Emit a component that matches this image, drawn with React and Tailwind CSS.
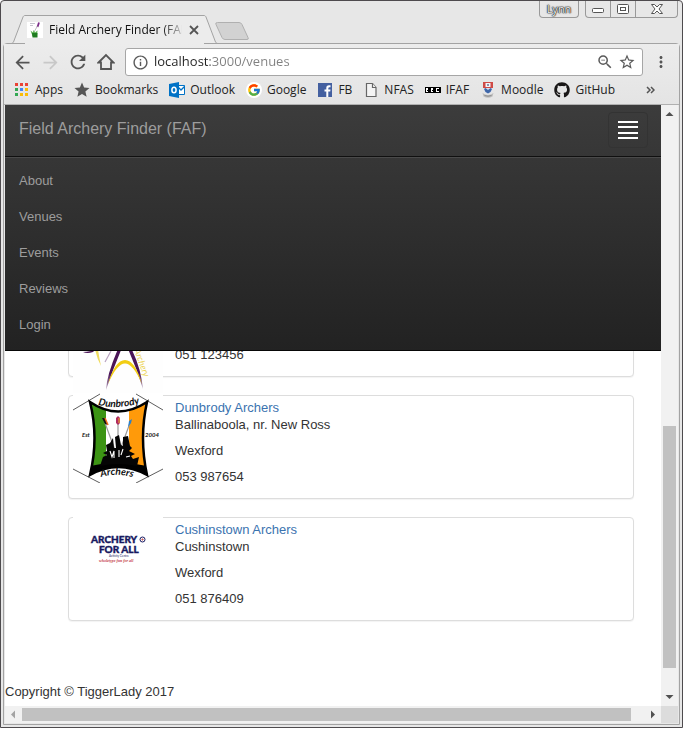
import React from "react";
import {
  MdArrowBack,
  MdArrowForward,
  MdInfoOutline,
  MdMoreVert,
  MdRefresh,
  MdStar,
  MdStarBorder,
  MdZoomOut,
} from "react-icons/md";
import { FaGithub } from "react-icons/fa";
import { FcGoogle } from "react-icons/fc";

/* ---------- window frame ---------- */

function FaviconGrass() {
  return (
    <svg width="16" height="16" viewBox="0 0 16 16" aria-hidden="true" className="shrink-0">
      <rect width="16" height="16" fill="#fff" />
      <path d="M3 1.500h5M3 3.500h3" stroke="#c4c4cc" />
      <path d="M10.500 5 12 .5" stroke="#7a2a88" strokeWidth="1.800" />
      <path d="M7 10 10.500 4" stroke="#a9a9a9" strokeWidth=".8" />
      <path d="M5.500 14 3.500 8.500l2.500 2 .5-2.500 1.500 2.500 2.500-2L10 14z" fill="#57b04e" />
      <path d="M5.500 15.500h5L10.500 11H5z" fill="#1f7d20" />
    </svg>
  );
}

function TitleBar() {
  return (
    <header className="flex h-[42px] shrink-0 items-end pl-[10px]">
      <svg width="14" height="29" viewBox="0 0 14 29" aria-hidden="true" className="-mb-px shrink-0">
        <path d="M0 29C1 29 2 28 2.500 27L12 2C12.500 1 13 .5 14 .5V29Z" fill="#ececec" />
        <path d="M0 28.500C1 28.500 2 28 2.500 27L12 2C12.500 1 13 .5 14 .5" fill="none" stroke="#a3a3a3" />
      </svg>
      <div className="z-10 -mb-px flex h-[29px] w-[179px] items-center border-t border-[#a3a3a3] bg-[#ececec] pl-0.5">
        <FaviconGrass />
        <span className="ml-1.5 w-[133px] overflow-hidden bg-linear-to-r from-[#111] from-85% to-[#11111130] bg-clip-text text-xs whitespace-nowrap text-transparent">
          Field Archery Finder (FAF)
        </span>
        <button type="button" aria-label="Close tab" className="ml-1.5 shrink-0">
          <svg width="12" height="12" viewBox="0 0 12 12" className="block">
            <path d="M2 2l8 8M10 2l-8 8" stroke="#555" strokeWidth="1.800" />
          </svg>
        </button>
      </div>
      <svg width="14" height="29" viewBox="0 0 14 29" aria-hidden="true" className="-mb-px shrink-0">
        <path d="M14 29C13 29 12 28 11.500 27L2 2C1.500 1 1 .5 0 .5V29Z" fill="#ececec" />
        <path d="M14 28.500C13 28.500 12 28 11.500 27L2 2C1.500 1 1 .5 0 .5" fill="none" stroke="#a3a3a3" />
      </svg>
      <button type="button" aria-label="New tab" className="-ml-1 mb-[3px]">
        <svg width="36" height="18" viewBox="0 0 36 18" className="block">
          <path
            d="M3.500.5H25q2 0 3 2l6 13q1 2-1 2H11q-2 0-3-2L2 2.500Q1 .5 3.500.5Z"
            fill="#d2d2d2"
            stroke="#b0b0b0"
          />
        </svg>
      </button>
      <div className="ml-auto flex self-start pr-1">
        <button
          type="button"
          className="mr-1.5 h-[17px] w-10 rounded-b border border-t-0 border-[#999] text-[11px] leading-4 text-[#eee] [text-shadow:0_0_1px_#222,0_0_1px_#222,0_0_1px_#222,0_0_2px_#444]"
        >
          Lynn
        </button>
        <div className="flex h-[17px] divide-x divide-[#999] rounded-b border border-t-0 border-[#999] text-[#555]">
          <button type="button" aria-label="Minimise" className="grid w-[25px] place-items-center">
            <svg width="12" height="10" viewBox="0 0 12 10" fill="#fff" stroke="currentColor">
              <rect x=".5" y="4.500" width="11" height="4" rx="1" />
            </svg>
          </button>
          <button type="button" aria-label="Maximise" className="grid w-[25px] place-items-center">
            <svg width="12" height="10" viewBox="0 0 12 10" fill="#fff" stroke="currentColor">
              <rect x=".5" y=".5" width="11" height="9" rx="1" />
              <rect x="3.500" y="3.500" width="5" height="3" />
            </svg>
          </button>
          <button type="button" aria-label="Close" className="grid w-[41px] place-items-center">
            <svg width="12" height="10" viewBox="0 0 12 10" fill="#fff" stroke="currentColor">
              <path d="M.5.5h3L6 3 8.500.5h3L8 5l3.500 4.500h-3L6 7 3.500 9.500h-3L4 5Z" />
            </svg>
          </button>
        </div>
      </div>
    </header>
  );
}

/* ---------- toolbar ---------- */

const navButton = "grid h-7 w-7 place-items-center text-[#555]";

function AddressRow() {
  return (
    <div className="flex h-7 items-center pl-1">
      <button type="button" aria-label="Back" className={navButton}>
        <MdArrowBack size={21} />
      </button>
      <button type="button" aria-label="Forward" className="grid h-7 w-7 place-items-center text-[#c8c8c8]">
        <MdArrowForward size={21} />
      </button>
      <button type="button" aria-label="Reload" className={navButton}>
        <MdRefresh size={22} />
      </button>
      <button type="button" aria-label="Home" className={navButton}>
        <svg width="18" height="18" viewBox="0 0 18 18" fill="none" stroke="currentColor" strokeWidth="1.800">
          <path d="M1.500 9.500 9 2l7.500 7.500H14V16H4V9.500Z" />
        </svg>
      </button>
      <div className="ml-[5px] flex h-7 min-w-0 flex-1 items-center rounded-[3px] border border-[#a6a6a6] bg-white px-1.5 text-[#5a5a5a]">
        <MdInfoOutline size={17} className="shrink-0" />
        <input
          type="text"
          aria-label="Address"
          defaultValue="localhost:3000/venues"
          className="ml-[5px] min-w-0 flex-1 bg-[linear-gradient(90deg,#222_56px,#808080_56px)] bg-clip-text text-[13px] text-transparent outline-none"
        />
        <button type="button" aria-label="Zoom out" className="mr-1">
          <MdZoomOut size={18} />
        </button>
        <button type="button" aria-label="Bookmark this page">
          <MdStarBorder size={18} />
        </button>
      </div>
      <button type="button" aria-label="Menu" className="mx-[9px] text-[#555]">
        <MdMoreVert size={18} />
      </button>
    </div>
  );
}

function AppsIcon() {
  const colours = ["#ea4335", "#ea4335", "#ea4335", "#34a853", "#4285f4", "#fbbc05", "#34a853", "#fbbc05", "#fbbc05"];
  return (
    <svg width="16" height="16" viewBox="0 0 16 16">
      {colours.map((c, i) => (
        <rect key={i} x={1 + (i % 3) * 5} y={1 + Math.floor(i / 3) * 5} width="3" height="3" fill={c} />
      ))}
    </svg>
  );
}

function OutlookIcon() {
  return (
    <svg width="16" height="16" viewBox="0 0 16 16">
      <path d="M8.500 3.500h7v9h-7" fill="#fff" stroke="#0072c6" />
      <path d="m9 5 3 3 4-4" fill="none" stroke="#0072c6" strokeWidth="1.300" />
      <path d="M0 2 10 0v16L0 14Z" fill="#0072c6" />
      <ellipse cx="5" cy="8" rx="2.100" ry="2.800" fill="none" stroke="#fff" strokeWidth="1.500" />
    </svg>
  );
}

function FacebookIcon() {
  return (
    <svg width="16" height="16" viewBox="0 0 16 16">
      <rect x="1" y="1" width="14" height="14" fill="#4460a0" />
      <path d="M9.300 15V9.500H7.500v-2h1.800V6q0-2.700 2.700-2.700h1.500v2h-1q-1.200 0-1.200 1.100v1.100h2.200l-.3 2h-1.900V15Z" fill="#fff" />
    </svg>
  );
}

function PageIcon() {
  return (
    <svg width="16" height="16" viewBox="0 0 16 16" fill="#f4f4f4" stroke="#666" strokeWidth="1.200">
      <path d="M3.500 1.500h6l3.500 4v9H3.500Z" />
      <path d="M9.500 1.500v4H13" />
    </svg>
  );
}

function BbcIcon() {
  return (
    <svg width="16" height="16" viewBox="0 0 16 16" shapeRendering="crispEdges">
      <path d="M0 5h5v6H0ZM5 5h5v6H5ZM10 5h6v6h-6Z" fill="#000" />
      <path
        d="M1 6h2v1H2v0h1v1H2v1h1v1H1ZM6 6h2v1H7v0h1v1H7v1h1v1H6ZM11 6h3v1h-2v2h2v1h-3Z"
        fill="#fff"
      />
      <path d="M4.500 5h.5v6h-.5ZM9.500 5h.5v6h-.5Z" fill="#e6e6e6" />
    </svg>
  );
}

function CrestIcon() {
  return (
    <svg width="16" height="16" viewBox="0 0 16 16">
      <path d="M3 0h10v6H3Z" fill="#cf4a45" />
      <path d="M5.500 1h5v4h-5Z" fill="#f3f3f6" />
      <path d="M7 2h2v2H7Z" fill="#8a92b0" />
      <path d="M3 6h10l-1.500 4L8 12l-3.500-2Z" fill="#dfe3ee" />
      <path d="M5.500 6 8 8l2.500-2 1.500 1-1.500 3L8 11.500 5.500 10 4 7Z" fill="#3f67a8" />
      <path d="M2.500 11q5.500 4 11 0l-1 3.500q-4.500 2.500-9 0Z" fill="#bdbdbd" />
      <path d="M4.500 13.500q3.500 1.500 7 0" stroke="#8d8d8d" fill="none" />
    </svg>
  );
}

const bookmarks = [
  { label: "Apps", icon: <AppsIcon /> },
  { label: "Bookmarks", icon: <MdStar size={18} className="-m-px text-[#555]" /> },
  { label: "Outlook", icon: <OutlookIcon /> },
  { label: "Google", icon: <span className="grid size-4 place-items-center rounded-full bg-white"><FcGoogle size={14} /></span> },
  { label: "FB", icon: <FacebookIcon /> },
  { label: "NFAS", icon: <PageIcon /> },
  { label: "IFAF", icon: <BbcIcon /> },
  { label: "Moodle", icon: <CrestIcon /> },
  { label: "GitHub", icon: <FaGithub size={16} className="text-[#191717]" /> },
];

function BookmarksBar() {
  return (
    <nav aria-label="Bookmarks" className="flex h-7 items-center gap-[11px] pr-6 pl-[10px] text-xs text-[#222]">
      {bookmarks.map((b) => (
        <a key={b.label} href="#" className="flex items-center gap-[5px] whitespace-nowrap">
          {b.icon}
          {b.label}
        </a>
      ))}
      <button type="button" aria-label="More bookmarks" className="ml-auto">
        <svg width="9" height="8" viewBox="0 0 9 8" fill="none" stroke="#555" strokeWidth="1.500">
          <path d="m1 1 3 3-3 3M5 1l3 3-3 3" />
        </svg>
      </button>
    </nav>
  );
}

/* ---------- site ---------- */

function SiteNav() {
  return (
    <nav className="shrink-0 border-b border-[#080808] bg-linear-to-b from-[#3c3c3c] to-[#222] text-[13px] leading-[18px] text-[#9d9d9d]">
      <div className="flex h-[51px] items-start justify-between pt-[7px] pr-[13px] pl-3.5">
        <a href="#" className="pt-2 text-base leading-[18px]">
          Field Archery Finder (FAF)
        </a>
        <button
          type="button"
          aria-label="Toggle navigation"
          className="flex h-9 w-10 flex-col items-center justify-between rounded border border-[#333] py-2"
        >
          <span className="h-0.5 w-5 bg-white" />
          <span className="h-0.5 w-5 bg-white" />
          <span className="h-0.5 w-5 bg-white" />
          <span className="h-0.5 w-5 bg-white" />
        </button>
      </div>
      <ul className="border-t border-[#101010] px-3.5 pt-1.5 pb-[7px] shadow-[inset_0_1px_0_rgba(255,255,255,0.1)]">
        {["About", "Venues", "Events", "Reviews", "Login"].map((item) => (
          <li key={item}>
            <a href="#" className="block py-[9px]">
              {item}
            </a>
          </li>
        ))}
      </ul>
    </nav>
  );
}

function StarArcherLogo() {
  return (
    <svg width="90" height="122" viewBox="0 0 90 122" role="img" aria-label="Star archery club logo" className="-mt-1.5 -mb-8 block shrink-0">
      <defs>
        <linearGradient id="leg" x1="0" y1="0" x2="0" y2="1">
          <stop offset=".6" stopColor="#4a1457" />
          <stop offset="1" stopColor="#4a1457" stopOpacity=".35" />
        </linearGradient>
      </defs>
      <rect width="90" height="122" fill="#fefefe" />
      <path d="M10 81q5 0 12-2l-2 2q-6 2-10 0Z" fill="#4a1457" />
      <path d="M22 78l3 0q1 8 3 17Q24 88 22 78Z" fill="#f0dc60" />
      <path d="M38 80 32 91" stroke="#b9a3c0" strokeWidth="1.200" />
      <path d="M45 78h3.500Q40 98 33 119 34 103 45 78Z" fill="url(#leg)" />
      <path d="M55 78h3.500Q68 97 70 118 64 98 55 78Z" fill="url(#leg)" />
      <path d="M35 113Q42 89 52 89T69 113Q60 92.500 52 92.500T35 113Z" fill="#f2cd13" />
      <text transform="translate(61 79) rotate(70)" fontSize="9" fontStyle="italic" fill="#ecd458" className="font-['Lato',sans-serif]">
        Archery
      </text>
    </svg>
  );
}

function DunbrodyLogo() {
  return (
    <svg width="90" height="90" viewBox="0 0 90 90" role="img" aria-label="Dunbrody Archers logo" className="-mt-1.5 block shrink-0">
      <defs>
        <clipPath id="shield">
          <path d="M17 9Q45 28 74 9 66 45 74 82 45 65 17 82 26 45 17 9Z" />
        </clipPath>
        <path id="arcTop" d="M25 12Q45 17 68 10" />
        <path id="arcBottom" d="M28 84Q45 79 66 86" />
      </defs>
      <rect width="90" height="90" fill="#fff" />
      <path d="M0 17 27 1M63 1 90 17M0 76 27 90M63 90 90 76" stroke="#333" strokeWidth=".8" />
      <g clipPath="url(#shield)">
        <path d="M14 5h19v80H14Z" fill="#3c9414" />
        <path d="M33 5h23v80H33Z" fill="#fff" />
        <path d="M56 5h21v80H56Z" fill="#ff9a0a" />
        <path d="M17 73Q45 66 74 73V85H17Z" fill="#000" />
      </g>
      <path d="M17 9Q45 28 74 9 66 45 74 82 45 66 17 82 26 45 17 9Z" fill="none" stroke="#000" strokeWidth="2.500" />
      <path d="M32 30 46 68M45 28v38M57 30 43 68" stroke="#9b9b9b" strokeWidth="1.200" />
      <path d="M29 25l3 0 3 7-3-1Z" fill="#111" />
      <path d="M32 25l3 7" stroke="#ef6b21" strokeWidth="1.500" />
      <path d="M43 25l2-2 2 2v5l-2 2-2-2Z" fill="#b02d62" />
      <path d="M46 25v5" stroke="#f5b52a" />
      <path d="M56 28l3-2-1 4-3 4Z" fill="#2c80c9" />
      <path
        d="M27 73 30 64 34 62 30 60 34 58 33 52 37 50 40 45 41 55 43 55 42 44 46 42 48 52 50 53 50 44 55 43 57 53 59 55 56 58 62 61 58 63 60 66 66 64 64 73Q45 69 27 73Z"
        fill="#050505"
      />
      <path d="M37 58l2 6 2-6v7M46 57v7M50 56l-2 6M53 64l4-1" fill="none" stroke="#fff" strokeWidth="1.100" />
      <g fontWeight="bold" fontStyle="italic" fill="#111" className="font-['Lato',sans-serif]">
        <text fontSize="10">
          <textPath href="#arcTop">Dunbrody</textPath>
        </text>
        <text fontSize="10">
          <textPath href="#arcBottom">Archers</textPath>
        </text>
        <text x="9" y="44" fontSize="6">Est</text>
        <text x="72" y="44" fontSize="6">2004</text>
      </g>
    </svg>
  );
}

function ArcheryForAllLogo() {
  return (
    <svg width="90" height="90" viewBox="0 0 90 90" role="img" aria-label="Archery for All logo" className="-mt-1.5 block shrink-0">
      <rect width="90" height="90" fill="#fff" />
      <g fontWeight="900" fill="#17195f" stroke="#17195f" strokeWidth=".4" className="font-['Lato',sans-serif]">
        <text x="18" y="28" fontSize="10">ARCHERY</text>
        <text x="26" y="38" fontSize="10">FOR ALL</text>
      </g>
      <g fill="none" stroke="#17195f">
        <circle cx="69.500" cy="24.500" r="2.500" />
        <circle cx="69.500" cy="24.500" r=".6" stroke="#b33" />
      </g>
      <text x="36" y="42" fontSize="3" fill="#17195f" className="font-['Lato',sans-serif]">Activity Centre</text>
      <text x="26" y="47" fontSize="4" fontStyle="italic" fontWeight="bold" fill="#c43a45" className="font-['Liberation_Serif',serif]">
        wholetype fun for all
      </text>
    </svg>
  );
}

const venues = [
  { name: "Star Archers", town: "Enniscorthy", county: "Wexford", phone: "051 123456", Logo: StarArcherLogo },
  { name: "Dunbrody Archers", town: "Ballinaboola, nr. New Ross", county: "Wexford", phone: "053 987654", Logo: DunbrodyLogo },
  { name: "Cushinstown Archers", town: "Cushinstown", county: "Wexford", phone: "051 876409", Logo: ArcheryForAllLogo },
];

function VenueCard({ name, town, county, phone, Logo }) {
  return (
    <li className="flex items-start gap-3 rounded border border-[#ddd] bg-white px-1 pt-[3px] pb-1 shadow-[0_1px_1px_rgba(0,0,0,0.05)]">
      <Logo />
      <div className="pb-[9px]">
        <h2>
          <a href="#" className="text-[#3b73af]">
            {name}
          </a>
        </h2>
        <p>{town}</p>
        <p className="mt-[9px]">{county}</p>
        <p className="mt-[9px]">{phone}</p>
      </div>
    </li>
  );
}

/* ---------- scroll bars ---------- */

function Arrow({ points, fill }) {
  return (
    <svg width="17" height="17" viewBox="0 0 17 17" aria-hidden="true" className="shrink-0">
      <polygon points={points} fill={fill} />
    </svg>
  );
}

function VerticalScroll() {
  return (
    <div className="flex w-[17px] shrink-0 flex-col bg-[#f1f1f1] px-0.5">
      <span className="-mx-0.5 flex"><Arrow points="4.500,11 8.500,7 12.500,11" fill="#505050" /></span>
      <div className="flex-[304]" />
      <div className="flex-[242] bg-[#c1c1c1]" />
      <div className="flex-[21]" />
      <span className="-mx-0.5 flex"><Arrow points="4.500,6 8.500,10 12.500,6" fill="#505050" /></span>
    </div>
  );
}

function HorizontalScroll() {
  return (
    <div className="flex h-[17px] shrink-0">
      <div className="flex flex-1 bg-[#f1f1f1]">
        <Arrow points="10,4.500 6,8.500 10,12.500" fill="#a3a3a3" />
        <div className="my-0.5 flex-[609] bg-[#c1c1c1]" />
        <div className="flex-[13]" />
        <Arrow points="7,4.500 11,8.500 7,12.500" fill="#505050" />
      </div>
      <div className="w-[17px] bg-[#dcdcdc]" />
    </div>
  );
}

export default function App() {
  return (
    <div className="h-screen w-full bg-white pr-[3px] pb-0.5 font-['Open_Sans','Noto_Sans',sans-serif]">
      <div className="flex h-full flex-col rounded-t border border-[#4e4b4e] bg-[#e7e7e7]">
        <TitleBar />
        <div className="mx-0.5 mb-0.5 flex min-h-0 flex-1 flex-col rounded-t-sm border border-[#a3a3a3] bg-[#e7e7e7] pb-px">
          <div className="shrink-0 border-b border-[#b0b0b0] bg-linear-to-b from-[#ececec] to-[#e4e4e4] pt-1">
            <AddressRow />
            <BookmarksBar />
          </div>
          <div className="mx-px flex min-h-0 flex-1">
            <div className="flex min-w-0 flex-1 flex-col bg-white font-['Liberation_Sans',Arial,sans-serif] text-[13px] leading-[17px] text-[#333]">
              <SiteNav />
              <main className="flex min-h-0 flex-1 flex-col justify-end overflow-hidden">
                <ul className="mr-[27px] mb-[62px] ml-[63px] flex shrink-0 flex-col gap-[18px]">
                  {venues.map((v) => (
                    <VenueCard key={v.name} {...v} />
                  ))}
                </ul>
                <footer className="shrink-0 pb-[6px]">Copyright © TiggerLady 2017</footer>
              </main>
            </div>
            <VerticalScroll />
          </div>
          <div className="mx-px">
            <HorizontalScroll />
          </div>
        </div>
      </div>
    </div>
  );
}
